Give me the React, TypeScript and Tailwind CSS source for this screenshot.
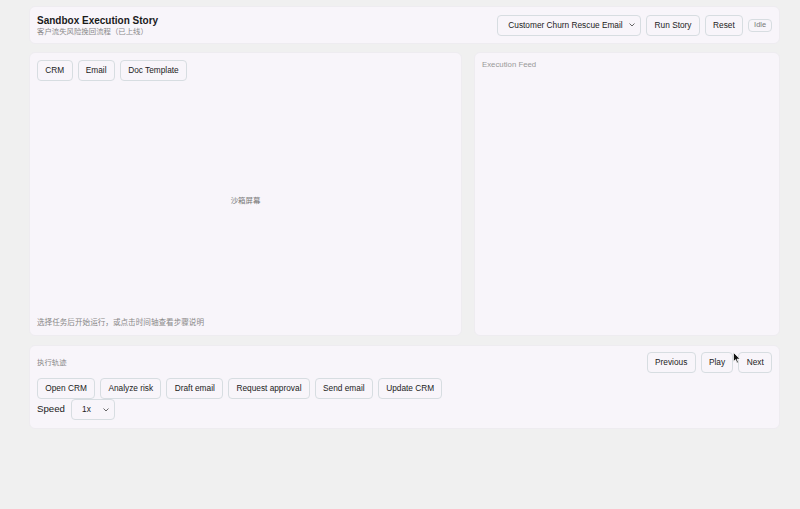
import React from "react";

const font = { fontFamily: '"Liberation Sans", Arial, "Noto Sans CJK SC", sans-serif' };

function Btn({ children }: { children: React.ReactNode }) {
  return (
    <div className="h-[21px] px-[7.3px] border border-[#d7dde1] rounded-[4px] bg-[#f8f5fa] text-[8.3px] text-[#222] flex items-center whitespace-nowrap">
      {children}
    </div>
  );
}

function Chevron() {
  return (
    <svg width="6" height="4" viewBox="0 0 6 4" fill="none">
      <path d="M0.8 0.8 L3 3 L5.2 0.8" stroke="#555" strokeWidth="0.9" strokeLinecap="round" strokeLinejoin="round" />
    </svg>
  );
}

export default function App() {
  const steps = ["Open CRM", "Analyze risk", "Draft email", "Request approval", "Send email", "Update CRM"];
  return (
    <div className="relative w-[800px] h-[509px] bg-[#f0f0f0] overflow-hidden" style={font}>
      <div className="ml-[29px] w-[751px] pt-[6px] flex flex-col">
        {/* Header */}
        <div className="h-[38px] rounded-[6px] bg-[#f8f5fa] border border-[#eeecf0] px-[7px] flex items-center justify-between">
          <div className="flex flex-col">
            <div className="text-[10px] font-bold leading-[12px] text-[#1a1a1a]">Sandbox Execution Story</div>
            <div className="text-[7.4px] leading-[9px] text-[#8a8a8a]">客户流失风险挽回流程（已上线）</div>
          </div>
          <div className="flex items-center gap-[5px]">
            <div className="w-[144px] h-[21px] pl-[10px] pr-[5px] border border-[#d7dde1] rounded-[4px] bg-[#f8f5fa] text-[8.3px] text-[#222] flex items-center justify-between">
              <span>Customer Churn Rescue Email</span>
              <Chevron />
            </div>
            <Btn>Run Story</Btn>
            <Btn>Reset</Btn>
            <div className="h-[13px] px-[5px] border border-[#d7dde1] rounded-[4px] text-[7.4px] text-[#777] flex items-center">Idle</div>
          </div>
        </div>

        {/* Main */}
        <div className="mt-[8px] h-[284px] flex gap-[12px]">
          <div className="w-[433px] rounded-[6px] bg-[#f8f5fa] border border-[#eeecf0] p-[7px] flex flex-col">
            <div className="flex gap-[5px]">
              <Btn>CRM</Btn>
              <Btn>Email</Btn>
              <Btn>Doc Template</Btn>
            </div>
            <div className="flex-1 flex items-center justify-center pt-[2px] text-[7.4px] text-[#777]">沙箱屏幕</div>
            <div className="text-[7.6px] leading-[10px] text-[#888]">选择任务后开始运行，或点击时间轴查看步骤说明</div>
          </div>
          <div className="flex-1 rounded-[6px] bg-[#f8f5fa] border border-[#eeecf0] px-[7px] pt-[7px]">
            <div className="text-[7.8px] leading-[9px] text-[#999]">Execution Feed</div>
          </div>
        </div>

        {/* Bottom */}
        <div className="mt-[9px] h-[84px] rounded-[6px] bg-[#f8f5fa] border border-[#eeecf0] px-[7px] pt-[6px] flex flex-col">
          <div className="h-[21px] flex items-center justify-between">
            <div className="text-[7.4px] text-[#888]">执行轨迹</div>
            <div className="flex gap-[5px]">
              <Btn>Previous</Btn>
              <Btn>Play</Btn>
              <Btn>Next</Btn>
            </div>
          </div>
          <div className="mt-[5px] flex gap-[5px]">
            {steps.map((s) => (
              <Btn key={s}>{s}</Btn>
            ))}
          </div>
          <div className="flex items-center gap-[6px]">
            <span className="text-[9.7px] text-[#1a1a1a]">Speed</span>
            <div className="w-[44px] h-[21px] pl-[10px] pr-[5px] border border-[#d7dde1] rounded-[4px] bg-[#f8f5fa] text-[8.3px] text-[#222] flex items-center justify-between">
              <span>1x</span>
              <Chevron />
            </div>
          </div>
        </div>
      </div>

      {/* mouse cursor */}
      <svg className="absolute left-[733px] top-[352px]" width="8" height="12" viewBox="0 0 8 12">
        <path d="M0.5 0.5 L0.5 9.5 L2.6 7.6 L4 11 L5.4 10.4 L4 7.1 L7 7.1 Z" fill="#111" stroke="#fff" strokeWidth="0.7" strokeLinejoin="round" />
      </svg>
    </div>
  );
}
